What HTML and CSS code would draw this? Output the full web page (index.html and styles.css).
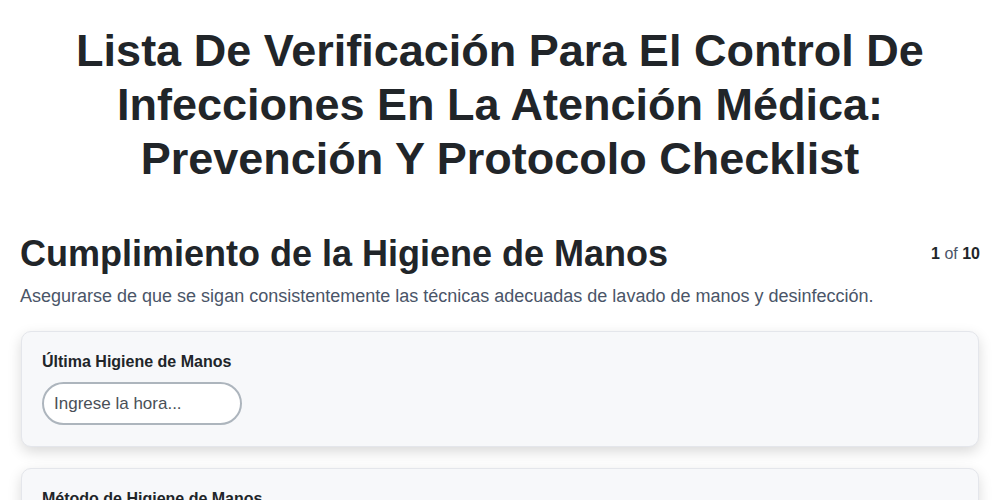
FILE: index.html
```html
<!DOCTYPE html>
<html lang="es">
<head>
<meta charset="utf-8">
<title>Lista De Verificación</title>
<link rel="stylesheet" href="styles.css">
</head>
<body>
<main class="page">
  <h1 class="title">Lista De Verificación Para El Control De Infecciones En La Atención Médica: Prevención Y Protocolo Checklist</h1>
  <section class="section">
    <div class="section-head">
      <h2 class="section-title">Cumplimiento de la Higiene de Manos</h2>
      <div class="counter"><b>1</b> of <b>10</b></div>
    </div>
    <p class="section-desc">Asegurarse de que se sigan consistentemente las técnicas adecuadas de lavado de manos y desinfección.</p>
    <div class="card">
      <label class="field-label" for="t1">Última Higiene de Manos</label>
      <input class="field-input" id="t1" type="text" placeholder="Ingrese la hora...">
    </div>
    <div class="card">
      <label class="field-label" for="t2">Método de Higiene de Manos</label>
      <input class="field-input" id="t2" type="text" placeholder="Ingrese el método...">
    </div>
  </section>
</main>
</body>
</html>
```
FILE: styles.css
```css
* { box-sizing: border-box; }
html, body { margin: 0; padding: 0; background: #ffffff; }
body {
  font-family: "Liberation Sans", Arial, sans-serif;
  color: #212529;
}
.page {
  padding: 24px 20px 20px;
}
.title {
  margin: 0 auto;
  max-width: 900px;
  text-align: center;
  font-size: 45px;
  line-height: 1.2;
  font-weight: 700;
  color: #212529;
}
.section {
  margin-top: 46px;
}
.section-head {
  display: flex;
  align-items: center;
  justify-content: space-between;
}
.section-title {
  margin: 0;
  font-size: 36px;
  line-height: 1.2;
  font-weight: 700;
  color: #212529;
}
.counter {
  font-size: 16px;
  line-height: 1.5;
  color: #4a5568;
}
.counter b { color: #212529; }
.section-desc {
  margin: 8px 0 21px;
  font-size: 18px;
  line-height: 1.5;
  color: #4a5568;
}
.card {
  background: #f7f8fa;
  border: 1px solid #e4e6eb;
  border-radius: 10px;
  padding: 20px 20px 21px;
  margin: 0 1px 21px;
  box-shadow: 0 5px 14px rgba(0, 0, 0, 0.15);
}
.field-label {
  display: block;
  font-size: 16px;
  line-height: 1.2;
  font-weight: 700;
  color: #212529;
  margin-bottom: 11px;
}
.field-input {
  display: block;
  width: 200px;
  height: 43px;
  padding: 0 10px;
  border: 2px solid #adb5bd;
  border-radius: 22px;
  background: #ffffff;
  font-family: "Liberation Sans", Arial, sans-serif;
  font-size: 17px;
  color: #212529;
  outline: none;
}
.field-input::placeholder { color: #495057; opacity: 1; }
```
